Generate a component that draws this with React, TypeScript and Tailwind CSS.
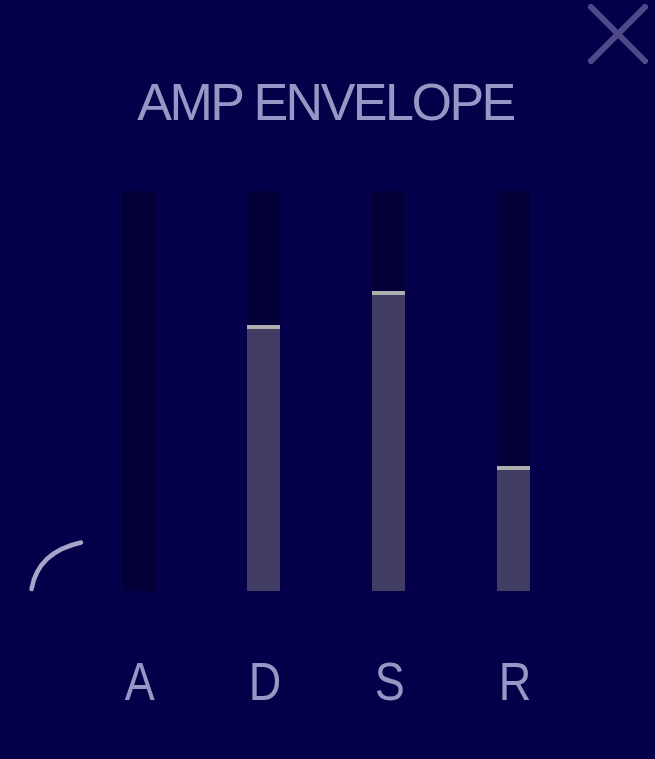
const stages = [
  { label: "A", level: 0 },
  { label: "D", level: 66.5 },
  { label: "S", level: 75 },
  { label: "R", level: 31.25 },
];

function Slider({ label, level }: { label: string; level: number }) {
  return (
    <div className="flex w-[33px] flex-col items-center">
      <div className="flex h-[400px] w-[33px] flex-col justify-end bg-[#020036]">
        {level > 0 && (
          <div className="flex flex-col bg-[#403c63]" style={{ height: `${level}%` }}>
            <div className="h-[4px] bg-[#aeaeae]" />
          </div>
        )}
      </div>
      <span className="ml-[3px] mt-[64px] scale-x-[0.85] text-[53px] leading-none text-[#9896c4]">
        {label}
      </span>
    </div>
  );
}

export default function App() {
  return (
    <div
      className="relative h-[759px] w-[655px] overflow-hidden bg-[#04004a]"
      style={{ fontFamily: '"Liberation Sans", Arial, sans-serif' }}
    >
      <button
        type="button"
        aria-label="Close"
        className="absolute left-[588px] top-[4px] h-[60px] w-[60px]"
      >
        <svg viewBox="0 0 60 60" className="h-full w-full">
          <path d="M3 3 L57 57 M57 3 L3 57" stroke="#4e4a8a" strokeWidth="6" strokeLinecap="square" />
        </svg>
      </button>

      <h1 className="pt-[76px] text-center text-[52px] leading-none tracking-[-2.5px] text-[#9896c4]">
        <span className="ml-[-4px]">AMP ENVELOPE</span>
      </h1>

      <div className="mt-[63px] flex gap-[92px] pl-[122px]">
        {stages.map((s) => (
          <Slider key={s.label} label={s.label} level={s.level} />
        ))}
      </div>

      {/* attack curve hint */}
      <svg className="absolute left-[28px] top-[538px] h-[56px] w-[58px]" viewBox="0 0 58 56">
        <path d="M3.5 51 Q10 14 53 4.5" fill="none" stroke="#a6a4c8" strokeWidth="4.5" strokeLinecap="round" />
      </svg>
    </div>
  );
}
